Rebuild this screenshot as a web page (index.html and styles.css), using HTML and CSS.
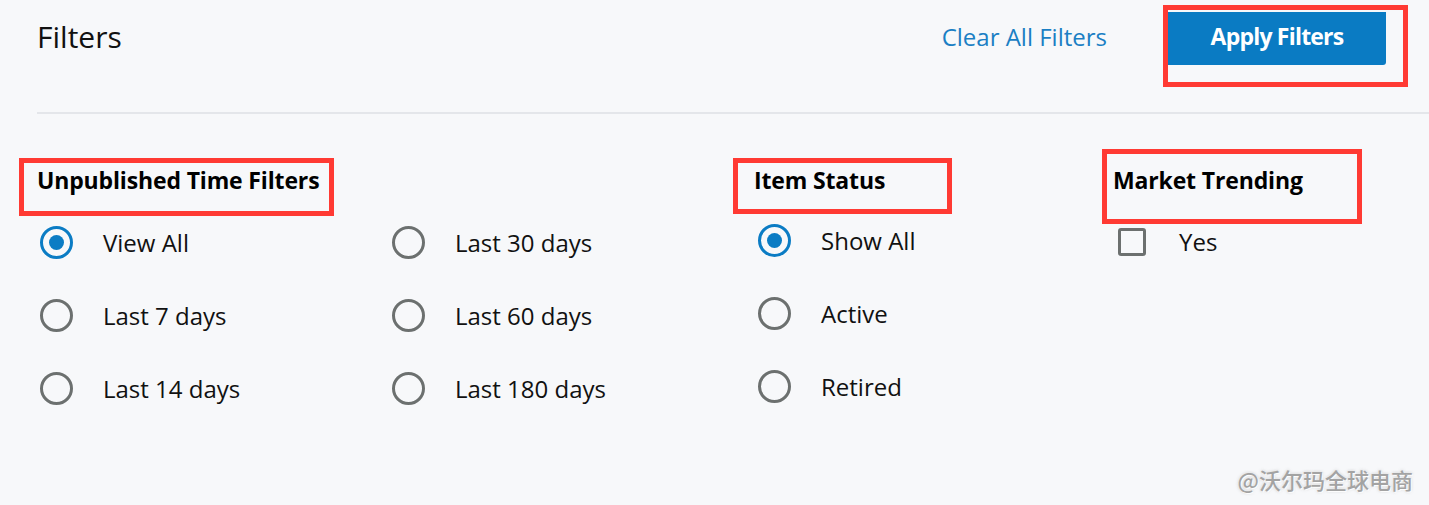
FILE: index.html
```html
<!DOCTYPE html>
<html lang="en">
<head>
<meta charset="utf-8">
<title>Filters</title>
<link rel="stylesheet" href="styles.css">
</head>
<body>
<div class="page">
  <header class="header">
    <h1 class="title">Filters</h1>
    <div class="actions">
      <a class="clear-link" href="#">Clear All Filters</a>
      <button class="apply-btn" type="button">Apply Filters</button>
    </div>
  </header>

  <section class="filters">
    <div class="group group-time">
      <h2 class="group-title">Unpublished Time Filters</h2>
      <div class="options options-two">
        <label class="option"><span class="radio checked"></span><span class="opt-label">View All</span></label>
        <label class="option"><span class="radio"></span><span class="opt-label">Last 30 days</span></label>
        <label class="option"><span class="radio"></span><span class="opt-label">Last 7 days</span></label>
        <label class="option"><span class="radio"></span><span class="opt-label">Last 60 days</span></label>
        <label class="option"><span class="radio"></span><span class="opt-label">Last 14 days</span></label>
        <label class="option"><span class="radio"></span><span class="opt-label">Last 180 days</span></label>
      </div>
    </div>

    <div class="group group-status">
      <h2 class="group-title">Item Status</h2>
      <div class="options options-one">
        <label class="option"><span class="radio checked"></span><span class="opt-label">Show All</span></label>
        <label class="option"><span class="radio"></span><span class="opt-label">Active</span></label>
        <label class="option"><span class="radio"></span><span class="opt-label">Retired</span></label>
      </div>
    </div>

    <div class="group group-trend">
      <h2 class="group-title">Market Trending</h2>
      <div class="options options-one">
        <label class="option option-check"><span class="checkbox"></span><span class="opt-label">Yes</span></label>
      </div>
    </div>
  </section>

  <div class="mark mark-time"></div>
  <div class="mark mark-status"></div>
  <div class="mark mark-trend"></div>
  <div class="mark mark-apply"></div>

  <div class="watermark">@沃尔玛全球电商</div>
</div>
</body>
</html>
```

FILE: styles.css
```css
* { box-sizing: border-box; }

html, body {
  margin: 0;
  padding: 0;
  background: #f7f8fa;
}

body {
  font-family: "Open Sans", "Noto Sans", "Liberation Sans", sans-serif;
  color: #111;
  width: 1429px;
  height: 505px;
  overflow: hidden;
}

.page {
  position: relative;
  width: 1429px;
  height: 505px;
}

.header {
  margin-left: 37px;
  height: 114px;
  padding: 12px 43px 0 0;
  border-bottom: 2px solid #e4e6ea;
  display: flex;
  justify-content: space-between;
  align-items: flex-start;
}

.title {
  margin: 0;
  font-size: 30px;
  font-weight: 400;
  line-height: 50px;
  color: #111;
}

.actions {
  display: flex;
  align-items: flex-start;
  gap: 61px;
}

.clear-link {
  font-size: 24px;
  color: #1b7fc4;
  text-decoration: none;
  line-height: 50px;
}

.apply-btn {
  width: 218px;
  height: 53px;
  border: none;
  border-radius: 0 0 3px 0;
  background: #0a7bc3;
  color: #fff;
  font-family: inherit;
  font-size: 23px;
  font-weight: 700;
  letter-spacing: -0.8px;
  padding: 0 0 6px 0;
}

.filters {
  display: flex;
  padding: 51px 0 0 37px;
}

.group-time { width: 717px; }
.group-status { width: 359px; }
.group-trend { width: 300px; }

.group-title {
  margin: 0;
  font-size: 23px;
  font-weight: 700;
  line-height: 30px;
  color: #000;
  letter-spacing: -0.15px;
}

.options {
  display: grid;
  row-gap: 40px;
  margin-top: 31px;
}

.options-two { grid-template-columns: 352px 352px; }
.options-one { grid-template-columns: 1fr; }

.group-status .options { margin-top: 29px; }
.group-trend .options { margin-top: 30px; }

.option {
  display: flex;
  align-items: center;
  height: 33px;
  padding-left: 3px;
  gap: 30px;
  font-size: 24px;
  line-height: 33px;
}

.group-status .option { padding-left: 4px; }
.group-trend .option { padding-left: 5px; gap: 33px; }

.radio {
  flex: none;
  width: 33px;
  height: 33px;
  border-radius: 50%;
  border: 3px solid #6c706f;
  background: #f7f8fa;
  position: relative;
}

.radio.checked {
  border-color: #0b7cc4;
}

.radio.checked::after {
  content: "";
  position: absolute;
  left: 50%;
  top: 50%;
  width: 15px;
  height: 15px;
  margin: -7.5px 0 0 -7.5px;
  border-radius: 50%;
  background: #0b7cc4;
}

.checkbox {
  flex: none;
  width: 28px;
  height: 28px;
  border: 3px solid #6c706f;
  border-radius: 3px;
  background: #f7f8fa;
}

.opt-label { color: #111; }

.mark {
  position: absolute;
  border: 5px solid #ff3a33;
  pointer-events: none;
}

.mark-time   { left: 19px;   top: 158px; width: 315px; height: 58px; }
.mark-status { left: 733px;  top: 158px; width: 219px; height: 56px; }
.mark-trend  { left: 1102px; top: 149px; width: 260px; height: 75px; }
.mark-apply  { left: 1163px; top: 5px;   width: 245px; height: 82px; }

.watermark {
  position: absolute;
  right: 16px;
  bottom: 10px;
  font-family: "Noto Sans CJK SC", "Noto Sans", sans-serif;
  font-size: 22px;
  font-weight: 500;
  color: #a3a3a3;
  text-shadow: 0 0 2px #fff, 1px 1px 1px #fff, 0 0 3px rgba(120,120,120,0.5);
}
```
